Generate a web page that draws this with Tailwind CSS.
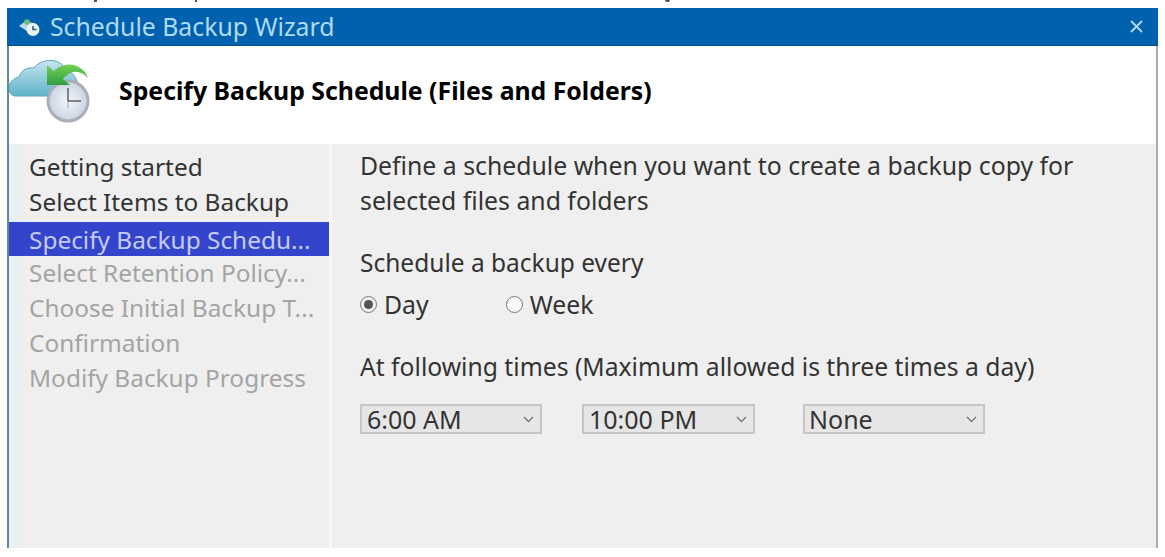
<!DOCTYPE html>
<html>
<head>
<meta charset="utf-8">
<title>Schedule Backup Wizard</title>
<script src="https://cdn.jsdelivr.net/npm/@tailwindcss/browser@4"></script>
</head>
<body class="bg-white font-['Noto_Sans',sans-serif] overflow-hidden">
<div class="relative h-[557px] w-[1165px] pt-2 pl-[7px] pr-[7px] pb-[9px]">
  <!-- bits of the cropped line above the window -->
  <span class="absolute left-[94px] top-0 w-[3px] h-[2px] bg-[#555]"></span>
  <span class="absolute left-[195px] top-0 w-[2px] h-[2px] bg-[#555]"></span>
  <span class="absolute left-[665px] top-0 w-[5px] h-[2px] rounded-b-full bg-[#555]"></span>
  <div class="h-full flex flex-col border-l-2 border-r-2 border-l-[#5f8a90] border-r-[#a9adb3]">
    <!-- title bar -->
    <div class="h-[38px] -mx-[2px] bg-[#0061ae] flex items-center pl-[11px] pr-[15px] text-[#b0daf0] border-b border-b-[#0a4f8a]">
      <svg width="24" height="18" viewBox="0 0 24 18" class="mr-2">
        <path d="M1 8l8-6 1 3c3-1 6 0 8 2l-5 3-3 1-1 2z" fill="#b9dce8"/>
        <circle cx="9" cy="4" r="2.8" fill="#6fbf73"/>
        <circle cx="15" cy="11.5" r="6.5" fill="#eef5f8"/>
        <path d="M15 8v3.5h3.5" stroke="#2c5f7a" stroke-width="1.6" fill="none"/>
      </svg>
      <span class="text-[24.8px] leading-none">Schedule Backup Wizard</span>
      <svg width="13" height="13" viewBox="0 0 13 13" class="ml-auto"><path d="M1 1l11 11M12 1L1 12" stroke="#b0daf0" stroke-width="1.8"/></svg>
    </div>
    <!-- header -->
    <div class="h-[98px] bg-white flex items-start">
      <svg width="84" height="70" viewBox="0 0 84 70" class="mt-[11px] -ml-px shrink-0">
        <defs>
          <linearGradient id="cloud" x1="0" y1="0" x2="0" y2="1"><stop offset="0" stop-color="#c6e6f0"/><stop offset="1" stop-color="#5fb2c9"/></linearGradient>
          <radialGradient id="face"><stop offset="0" stop-color="#f4f6fa"/><stop offset="1" stop-color="#c9d2e2"/></radialGradient>
          <linearGradient id="arrow" x1="0" y1="0" x2="0" y2="1"><stop offset="0" stop-color="#76cf55"/><stop offset="1" stop-color="#2ea03f"/></linearGradient>
        </defs>
        <path d="M1 31C1 25 6 21 11 20C13 13 20 10 26 11C30 5 40 2 47 4C54 6 57 10 58 14C66 14 71 24 71 39H7C3 39 1 35 1 31Z" fill="url(#cloud)" stroke="#5ba6bc" stroke-width="1"/>
        <circle cx="60" cy="44" r="20" fill="url(#face)" stroke="#a9aeb8" stroke-width="3"/>
        <path d="M60 31v13h13" stroke="#5c6068" stroke-width="1.5" fill="none"/>
        <path d="M60 44v7" stroke="#9aa0aa" stroke-width="1"/>
        <path d="M39 8L46 14C55 5 73 4 80 21C72 12 62 13 55 22L62 28H39Z" fill="url(#arrow)"/>
      </svg>
      <div class="mt-[28px] ml-[27px] text-[24.8px] leading-[32px] font-bold text-black whitespace-nowrap">Specify Backup Schedule (Files and Folders)</div>
    </div>
    <!-- body -->
    <div class="flex-1 flex bg-[#efefef]">
      <div class="w-[320px] pt-[5px] text-[24.4px] leading-[35px] whitespace-nowrap bg-[linear-gradient(90deg,#e2f1f6_0,#efefef_14px)]">
        <div class="pl-[20px] text-[#333333]">Getting started</div>
        <div class="pl-[20px] text-[#333333]">Select Items to Backup</div>
        <div class="pl-[20px] mt-[3px] h-[34px] leading-[36px] bg-[#3444cc] text-[#c3cdf3]">Specify Backup Schedu...</div>
        <div class="pl-[20px] -mt-px text-[#a4a4a4]">Select Retention Policy...</div>
        <div class="pl-[20px] text-[#a4a4a4]">Choose Initial Backup T...</div>
        <div class="pl-[20px] text-[#a4a4a4]">Confirmation</div>
        <div class="pl-[20px] text-[#a4a4a4]">Modify Backup Progress</div>
      </div>
      <div class="w-[3px] bg-[#f8f8f8]"></div>
      <div class="flex-1 pl-[28px] pt-[4px] text-[#333333] text-[24.8px]">
        <p class="leading-[35px]">Define a schedule when you want to create a backup copy for<br>selected files and folders</p>
        <p class="mt-[27px] leading-[36px] text-[24.5px]">Schedule a backup every</p>
        <div class="flex items-center leading-[36px] mt-[5px]">
          <span class="w-[17px] h-[17px] rounded-full border border-[#777] flex items-center justify-center mr-[7px]"><span class="w-[9px] h-[9px] rounded-full bg-[#555]"></span></span>
          <span>Day</span>
          <span class="w-[17px] h-[17px] rounded-full border border-[#777] ml-[77px] mr-[7px] bg-[#f8f8f8]"></span>
          <span>Week</span>
        </div>
        <p class="mt-[27px] leading-[36px] text-[24.7px]">At following times (Maximum allowed is three times a day)</p>
        <div class="flex mt-[19px] text-[25px]">
          <div class="w-[182px] h-[30px] border-2 border-[#c6c6c6] bg-[#e6e6e6] flex items-center pl-[5px] pr-[6px] leading-none">6:00 AM
            <svg width="11" height="7" viewBox="0 0 11 7" class="ml-auto"><path d="M1 1l4.5 4.5L10 1" stroke="#777" stroke-width="1.4" fill="none"/></svg></div>
          <div class="w-[173px] h-[30px] ml-[40px] border-2 border-[#c6c6c6] bg-[#e6e6e6] flex items-center pl-[5px] pr-[6px] leading-none">10:00 PM
            <svg width="11" height="7" viewBox="0 0 11 7" class="ml-auto"><path d="M1 1l4.5 4.5L10 1" stroke="#777" stroke-width="1.4" fill="none"/></svg></div>
          <div class="w-[182px] h-[30px] ml-[48px] border-2 border-[#c6c6c6] bg-[#e6e6e6] flex items-center pl-[4px] pr-[6px] leading-none">None
            <svg width="11" height="7" viewBox="0 0 11 7" class="ml-auto"><path d="M1 1l4.5 4.5L10 1" stroke="#777" stroke-width="1.4" fill="none"/></svg></div>
        </div>
      </div>
    </div>
  </div>
</div>
</body>
</html>
